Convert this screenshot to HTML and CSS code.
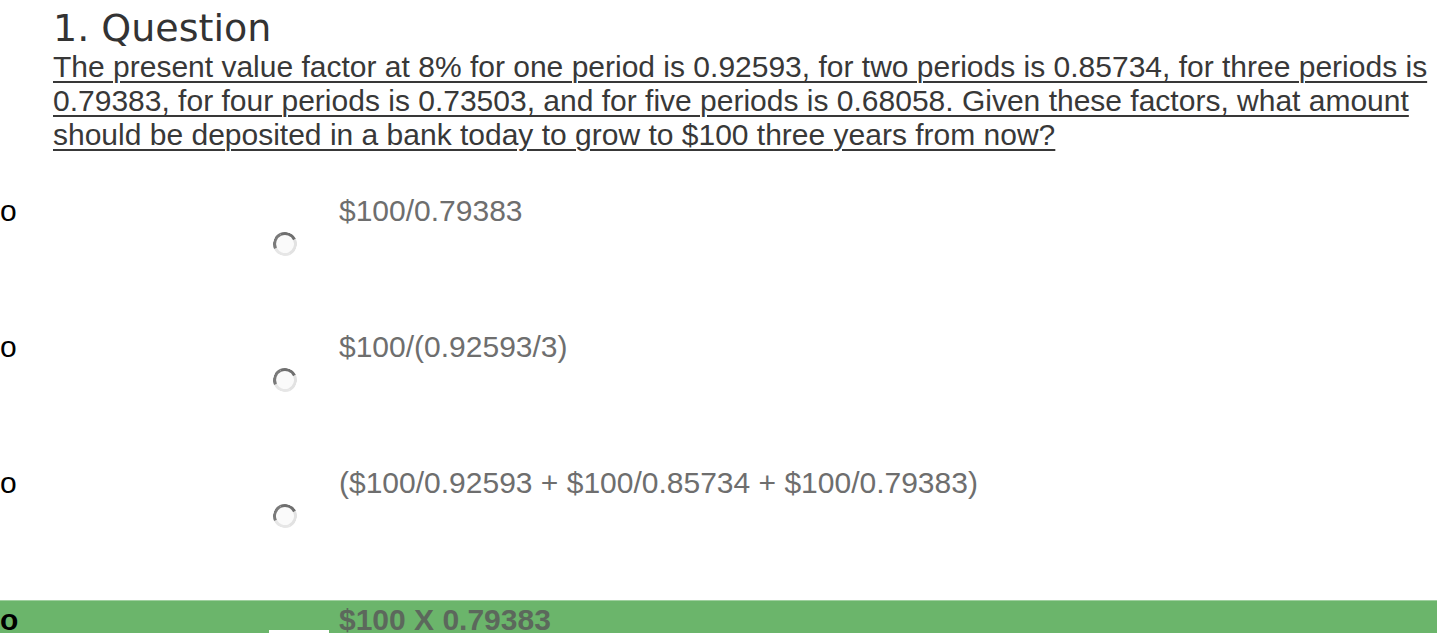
FILE: index.html
```html
<!DOCTYPE html>
<html>
<head>
<meta charset="utf-8">
<link rel="stylesheet" href="styles.css">
</head>
<body>
<div class="question">
  <h1 class="q-title">1. Question</h1>
  <p class="q-text">The present value factor at 8% for one period is 0.92593, for two periods is 0.85734, for three periods is 0.79383, for four periods is 0.73503, and for five periods is 0.68058. Given these factors, what amount should be deposited in a bank today to grow to $100 three years from now?</p>
</div>
<ul class="options">
  <li class="option">
    <span class="marker">o</span>
    <span class="radio-cell"><span class="radio"></span></span>
    <span class="opt-text">$100/0.79383</span>
  </li>
  <li class="option">
    <span class="marker">o</span>
    <span class="radio-cell"><span class="radio"></span></span>
    <span class="opt-text">$100/(0.92593/3)</span>
  </li>
  <li class="option">
    <span class="marker">o</span>
    <span class="radio-cell"><span class="radio"></span></span>
    <span class="opt-text">($100/0.92593 + $100/0.85734 + $100/0.79383)</span>
  </li>
  <li class="option correct">
    <span class="marker">o</span>
    <span class="radio-cell"><span class="check-box"></span></span>
    <span class="opt-text">$100 X 0.79383</span>
  </li>
</ul>
</body>
</html>
```

FILE: styles.css
```css
html, body {
  margin: 0;
  padding: 0;
  background: #ffffff;
  overflow: hidden;
}
body {
  font-family: "Liberation Sans", Arial, sans-serif;
}
.question {
  padding: 6px 0 0 53px;
}
.q-title {
  margin: 0;
  font-family: "DejaVu Sans", sans-serif;
  font-weight: normal;
  font-size: 38px;
  line-height: 44px;
  color: #333333;
}
.q-text {
  margin: 0;
  font-size: 30px;
  line-height: 34px;
  color: #383838;
  text-decoration: underline;
  text-underline-offset: 4px;
  text-decoration-thickness: 2px;
}
.options {
  list-style: none;
  margin: 40px 0 0 0;
  padding: 0;
}
.option {
  display: grid;
  grid-template-columns: 269px 70px 1fr;
  height: 136px;
  padding-top: 2px;
  box-sizing: border-box;
  font-size: 30px;
  line-height: 34px;
}
.marker {
  color: #000000;
}
.opt-text {
  color: #6e6e6e;
}
.radio-cell {
  display: flex;
  flex-direction: column;
  align-items: flex-start;
}
.radio {
  margin: 38px 0 0 4px;
  width: 24px;
  height: 24px;
  box-sizing: border-box;
  border-radius: 50%;
  border: 3px solid;
  border-color: #6f6f6f #e2e2e2 #e6e6e6 #7a7a7a;
  transform: rotate(20deg);
  background: #fafafa;
}
.correct {
  background: #6bb56b;
  border-top: 1px solid #9fd09f;
  font-weight: bold;
}
.correct .opt-text {
  color: #5c685c;
}
.check-box {
  margin-top: 27px;
  width: 60px;
  height: 30px;
  background: #ffffff;
}
```
